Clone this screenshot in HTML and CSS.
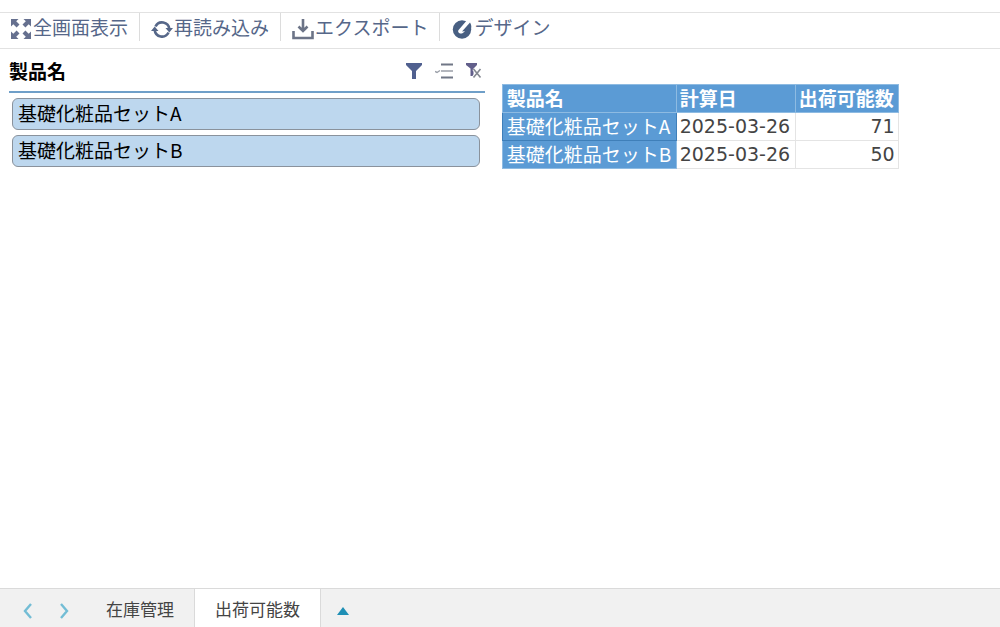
FILE: index.html
```html
<!DOCTYPE html>
<html lang="ja">
<head>
    <meta charset="UTF-8">
    <meta name="viewport" content="width=device-width, initial-scale=1.0">
    <title>出荷可能数</title>
    <link rel="stylesheet" href="styles.css">
</head>
<body>
    <header class="toolbar">
        <button class="tool" type="button">
            <svg class="tool-icon" viewBox="0 0 22 22">
                <g fill="#66708f">
                    <path d="M1 1h7.500L6.200 3.300l3.300 3.300-2.900 2.900-3.300-3.300L1 8.500z"/>
                    <path d="M21 1h-7.500l2.300 2.300-3.300 3.300 2.900 2.900 3.300-3.300L21 8.500z"/>
                    <path d="M1 21h7.500l-2.300-2.300 3.300-3.300-2.900-2.900-3.300 3.300L1 13.500z"/>
                    <path d="M21 21h-7.500l2.300-2.300-3.300-3.300 2.900-2.900 3.300 3.300L21 13.500z"/>
                </g>
            </svg>
            <span>全画面表示</span>
        </button>
        <button class="tool" type="button">
            <svg class="tool-icon" viewBox="0 0 22 22">
                <path d="M4.500 8.500A7.300 7.300 0 0 1 18.300 11M17.500 14.500A7.300 7.300 0 0 1 3.700 12" fill="none" stroke="currentColor" stroke-width="2.600"/>
                <path d="M14.500 10h7.500l-3.700 4.500zM0 13h7.500L3.700 8.500z" fill="currentColor"/>
            </svg>
            <span>再読み込み</span>
        </button>
        <button class="tool" type="button">
            <svg class="tool-icon" viewBox="0 0 22 22">
                <path d="M11 1v12M6.500 8.500l4.500 4.500 4.500-4.500" fill="none" stroke="#6c7487" stroke-width="2.600"/>
                <path d="M1.500 13v7h19v-7" fill="none" stroke="#6c7487" stroke-width="2.600"/>
            </svg>
            <span>エクスポート</span>
        </button>
        <button class="tool" type="button">
            <svg class="tool-icon" viewBox="0 0 22 22">
                <circle cx="11" cy="11.500" r="9.200" fill="#485f82"/>
                <path d="M9 15.500c-2-1-2.500-2.500-1-4L17 1l4 5-8 8c-1.200 1.200-2.500 1.700-4 1.500z" fill="#fff"/>
                <path d="M11 13.500l8-9c1.500 2 1.800 5 .5 8z" fill="#485f82"/>
            </svg>
            <span>デザイン</span>
        </button>
    </header>

    <main class="sheet">
        <section class="slicer">
            <div class="slicer-header">
                <h2 class="slicer-title">製品名</h2>
                <div class="slicer-actions">
                    <button class="icon-button" type="button" aria-label="フィルター">
                        <svg viewBox="0 0 18 18"><path d="M1 1h16v2l-6 6v8H7V9L1 3z" fill="#50608f"/></svg>
                    </button>
                    <button class="icon-button" type="button" aria-label="複数選択">
                        <svg viewBox="0 0 18 18">
                            <path d="M6 2.500h12M6 15.500h12" stroke="#707786" stroke-width="1.800"/>
                            <path d="M6 9h12M0 9.500l2 1 3-2" fill="none" stroke="#9a9fa8" stroke-width="1.400"/>
                        </svg>
                    </button>
                    <button class="icon-button" type="button" aria-label="フィルターのクリア">
                        <svg viewBox="0 0 18 18">
                            <path d="M1 1h11v2L8.500 6.500V14H5.500V6.500L1 3z" fill="#625f8b"/>
                            <path d="M8.500 7l7 8M15.500 7l-7 8" stroke="#fff" stroke-width="3"/>
                            <path d="M8.500 7l7 8.500M15.500 7l-7 8.500" stroke="#848891" stroke-width="1.600"/>
                        </svg>
                    </button>
                </div>
            </div>
            <div class="slicer-items">
                <button class="slicer-item" type="button">基礎化粧品セットA</button>
                <button class="slicer-item" type="button">基礎化粧品セットB</button>
            </div>
        </section>

        <table class="pivot">
            <thead>
                <tr>
                    <th class="col-name" scope="col">製品名</th>
                    <th class="col-date" scope="col">計算日</th>
                    <th class="col-count" scope="col">出荷可能数</th>
                </tr>
            </thead>
            <tbody>
                <tr>
                    <th class="selected" scope="row">基礎化粧品セットA</th>
                    <td>2025-03-26</td>
                    <td class="number">71</td>
                </tr>
                <tr>
                    <th scope="row">基礎化粧品セットB</th>
                    <td>2025-03-26</td>
                    <td class="number">50</td>
                </tr>
            </tbody>
        </table>
    </main>

    <footer class="tabbar">
        <button class="tab-nav" type="button" aria-label="前のシート">
            <svg viewBox="0 0 12 16"><path d="M9 1L3 8l6 7" fill="none" stroke="#73bdd5" stroke-width="2.400"/></svg>
        </button>
        <button class="tab-nav" type="button" aria-label="次のシート">
            <svg viewBox="0 0 12 16"><path d="M3 1l6 7-6 7" fill="none" stroke="#73bdd5" stroke-width="2.400"/></svg>
        </button>
        <button class="tab" type="button">在庫管理</button>
        <button class="tab active" type="button">出荷可能数</button>
        <button class="tab-list" type="button" aria-label="シート一覧">
            <svg viewBox="0 0 12 8"><path d="M0 8l6-8 6 8z" fill="#1f8fb5"/></svg>
        </button>
    </footer>
</body>
</html>
```

FILE: styles.css
```css
* {
    box-sizing: border-box;
}

body {
    display: flex;
    flex-direction: column;
    min-height: 100vh;
    margin: 0;
    padding-top: 12px;
    background-color: #fff;
    color: #000;
    font-family: "Noto Sans CJK JP", sans-serif;
    font-size: 19px;
}

button {
    margin: 0;
    padding: 0;
    border: none;
    background: none;
    color: inherit;
    font: inherit;
    cursor: pointer;
}

svg {
    display: block;
}

/* Toolbar */
.toolbar {
    display: flex;
    align-items: flex-start;
    height: 37px;
    border-top: 1px solid #e2e2e2;
    border-bottom: 1px solid #e2e2e2;
    color: #566789;
}

.tool {
    display: flex;
    align-items: center;
    gap: 1px;
    height: 28px;
    padding: 0 11px;
    border-right: 1px solid #dcdcdc;
    line-height: 28px;
}

.tool:first-child {
    padding-left: 10px;
}

.tool:last-child {
    border-right: none;
}

.tool-icon {
    width: 22px;
    height: 22px;
    margin-top: 4px;
}

/* Sheet area */
.sheet {
    display: flex;
    flex: 1;
    align-items: flex-start;
    gap: 17px;
    padding-left: 9px;
}

.slicer {
    width: 48%;
}

.slicer-header {
    display: flex;
    justify-content: space-between;
    align-items: center;
    height: 44px;
    border-bottom: 2px solid #6f9fc8;
}

.slicer-title {
    margin: 0;
    font-size: 19px;
    font-weight: 700;
}

.slicer-actions {
    display: flex;
    gap: 12px;
    padding-top: 2px;
    padding-right: 2px;
}

.icon-button {
    width: 18px;
    height: 18px;
}

.slicer-items {
    display: flex;
    flex-direction: column;
    gap: 5px;
    padding: 5px 5px 0 3px;
}

.slicer-item {
    height: 32px;
    padding: 0 5px 2px;
    border: 1px solid #8a929c;
    border-radius: 6px;
    background-color: #bdd7ee;
    line-height: 28px;
    text-align: left;
}

/* Pivot table */
.pivot {
    margin-top: 35px;
    border-collapse: collapse;
    line-height: 24px;
}

.pivot th,
.pivot td {
    height: 28px;
    padding: 0 4px 2px;
    border: 1px solid #e4e4e4;
    text-align: left;
    white-space: nowrap;
}

.pivot th {
    border-color: #8ebbe2;
    background-color: #5b9bd5;
    color: #fff;
}

.pivot tbody th {
    font-weight: 400;
}

.pivot .selected {
    border: 1px solid #3f7fb9;
}

.pivot td {
    color: #444;
    font-family: "DejaVu Sans", sans-serif;
}

.pivot .number {
    padding-right: 3px;
    text-align: right;
}

.pivot .col-name {
    width: 174px;
}

.pivot .col-date {
    width: 119px;
    padding-left: 3px;
}

.pivot .col-count {
    width: 103px;
    padding-left: 3px;
    padding-right: 3px;
}

.pivot td:nth-child(2) {
    padding-left: 3px;
}

/* Sheet tabs */
.tabbar {
    display: flex;
    height: 39px;
    border-top: 1px solid #dadada;
    background-color: #f1f1f1;
    color: #444;
    font-size: 17px;
}

.tabbar button {
    display: flex;
    align-items: center;
}

.tab-nav {
    padding-top: 6px;
}

.tab-nav svg {
    width: 12px;
    height: 16px;
}

.tab-nav:first-child {
    padding-left: 22px;
    padding-right: 24px;
}

.tabbar .tab {
    padding: 0 20px;
}

.tab-nav + .tab {
    margin-left: 16px;
}

.tab.active {
    border-left: 1px solid #dadada;
    border-right: 1px solid #dadada;
    background-color: #fff;
}

.tab-list {
    padding: 6px 16px 0;
}

.tab-list svg {
    width: 12px;
    height: 8px;
}
```
